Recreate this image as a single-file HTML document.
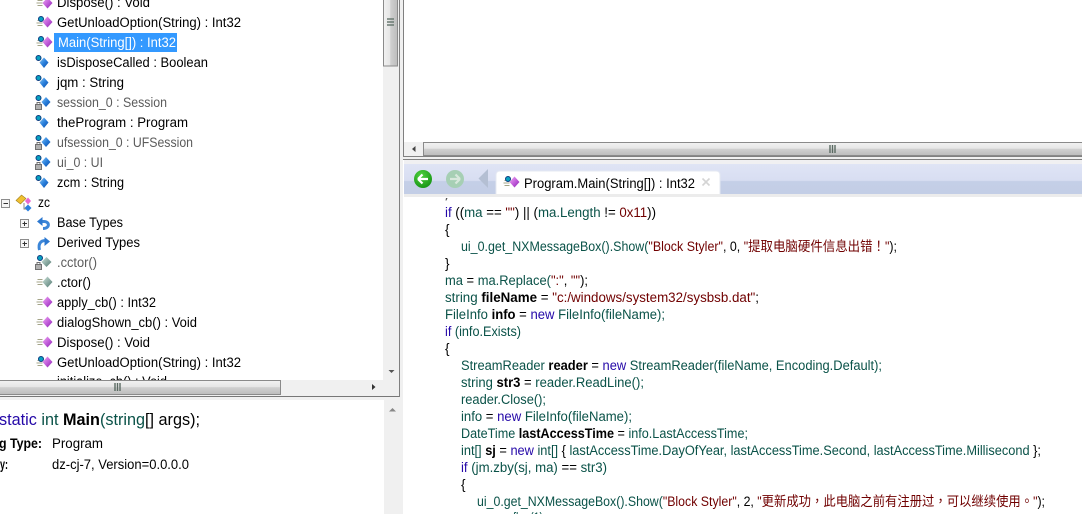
<!DOCTYPE html>
<html><head><meta charset="utf-8">
<style>
html,body{margin:0;padding:0;width:1082px;height:514px;overflow:hidden;background:#fff}
svg{display:block}
text{font-family:"Liberation Sans","Noto Sans CJK SC",sans-serif;font-size:13.5px;white-space:pre}
.t{fill:#000}
.g{fill:#5c5c5c}
.c{fill:#0a5248}
.k{fill:#2408a8}
.s{fill:#700000}
.p{fill:#000}
.b{font-weight:bold;fill:#000}
.z{font-family:"Noto Sans CJK TC",sans-serif}
</style></head><body>
<svg width="1082" height="514" viewBox="0 0 1082 514" xmlns="http://www.w3.org/2000/svg">
<defs>
<linearGradient id="dp" x1="0" y1="0" x2="1" y2="1"><stop offset="0" stop-color="#f0b0f0"/><stop offset=".5" stop-color="#c460dc"/><stop offset="1" stop-color="#8a24b0"/></linearGradient>
<linearGradient id="db" x1="0" y1="0" x2="1" y2="1"><stop offset="0" stop-color="#8cc8f4"/><stop offset=".5" stop-color="#2a80dc"/><stop offset="1" stop-color="#0a4ca8"/></linearGradient>
<linearGradient id="dg" x1="0" y1="0" x2="1" y2="1"><stop offset="0" stop-color="#d0e4dc"/><stop offset="1" stop-color="#507870"/></linearGradient>
<linearGradient id="hs" x1="0" y1="0" x2="0" y2="1"><stop offset="0" stop-color="#f2f2f2"/><stop offset=".45" stop-color="#e6e6e6"/><stop offset=".5" stop-color="#d0d0d0"/><stop offset="1" stop-color="#bcbcbc"/></linearGradient>
<linearGradient id="vs" x1="0" y1="0" x2="1" y2="0"><stop offset="0" stop-color="#f2f2f2"/><stop offset=".45" stop-color="#e6e6e6"/><stop offset=".5" stop-color="#d0d0d0"/><stop offset="1" stop-color="#bcbcbc"/></linearGradient>
<linearGradient id="band" x1="0" y1="0" x2="0" y2="1"><stop offset="0" stop-color="#dfe4f5"/><stop offset=".55" stop-color="#d8def2"/><stop offset=".58" stop-color="#c4cfe7"/><stop offset="1" stop-color="#c3cee6"/></linearGradient>
<radialGradient id="gb" cx=".4" cy=".3" r=".8"><stop offset="0" stop-color="#50d040"/><stop offset="1" stop-color="#109010"/></radialGradient>

<g id="lines"><path d="M0 -2.500h5M-1 0h6M0 2.500h5" stroke="#a4a488" stroke-width="1" fill="none"/></g>
<g id="dot"><circle cx="0" cy="0" r="2.500" fill="#08a0c0" stroke="#0c3c80" stroke-width="1"/></g>
<g id="m"><use href="#lines" x="37.500" y="0"/><path d="M47.500-5.500l5 5.500-5 5.500-5-5.500z" fill="url(#dp)"/></g>
<g id="ms"><use href="#lines" x="37.500" y="1"/><use href="#dot" x="41" y="-3"/><path d="M47.500-5.500l5 5.500-5 5.500-5-5.500z" fill="url(#dp)"/></g>
<g id="mc"><use href="#lines" x="37.500" y="0"/><path d="M47.500-5.500l5 5.500-5 5.500-5-5.500z" fill="url(#dg)"/></g>
<g id="f"><use href="#dot" x="38.500" y="-4"/><path d="M44-4.500l4.500 5-4.500 5.500-4.500-5.500z" fill="url(#db)"/></g>
<g id="lock"><rect x="35.500" y="2.500" width="6" height="5" fill="#b0b0b0" stroke="#707070"/><path d="M37 2.500v-2h3v2" fill="none" stroke="#707070"/></g>
<g id="fp"><use href="#dot" x="38.500" y="-4"/><path d="M46-5l4.500 5-4.500 5-4.500-5z" fill="url(#db)"/><use href="#lock"/></g>
<g id="plus"><rect x="-4" y="-4" width="8" height="8" fill="#f6f6f6" stroke="#8c8c8c"/><path d="M-2 0h4.500M0-2v4.500" stroke="#333"/></g>
<g id="grip"><path d="M0 0v8M2.500 0v8M5 0v8" stroke="#5a6a62" stroke-width="1.400"/></g>
<g id="gripv"><path d="M0 0h7M0 3h7M0 6h7" stroke="#6a7a72" stroke-width="1.400"/></g>
</defs>

<rect width="1082" height="514" fill="#fff"/>

<!-- tree -->
<rect x="54" y="33" width="123" height="19" fill="#3399ff"/>
<g>
<text x="57" y="7" class="t" textLength="93" lengthAdjust="spacingAndGlyphs">Dispose() : Void</text>
<text x="57" y="27" class="t" textLength="184" lengthAdjust="spacingAndGlyphs">GetUnloadOption(String) : Int32</text>
<text x="58" y="47" fill="#fff" textLength="118" lengthAdjust="spacingAndGlyphs">Main(String[]) : Int32</text>
<text x="57" y="67" class="t" textLength="151" lengthAdjust="spacingAndGlyphs">isDisposeCalled : Boolean</text>
<text x="57" y="87" class="t" textLength="67" lengthAdjust="spacingAndGlyphs">jqm : String</text>
<text x="57" y="107" class="g" textLength="110" lengthAdjust="spacingAndGlyphs">session_0 : Session</text>
<text x="57" y="127" class="t" textLength="131" lengthAdjust="spacingAndGlyphs">theProgram : Program</text>
<text x="57" y="147" class="g" textLength="136" lengthAdjust="spacingAndGlyphs">ufsession_0 : UFSession</text>
<text x="57" y="167" class="g" textLength="46" lengthAdjust="spacingAndGlyphs">ui_0 : UI</text>
<text x="57" y="187" class="t" textLength="67" lengthAdjust="spacingAndGlyphs">zcm : String</text>
<text x="38" y="207" class="t" textLength="12" lengthAdjust="spacingAndGlyphs">zc</text>
<text x="57" y="227" class="t" textLength="66" lengthAdjust="spacingAndGlyphs">Base Types</text>
<text x="57" y="247" class="t" textLength="83" lengthAdjust="spacingAndGlyphs">Derived Types</text>
<text x="57" y="267" class="g" textLength="40" lengthAdjust="spacingAndGlyphs">.cctor()</text>
<text x="57" y="287" class="t" textLength="34" lengthAdjust="spacingAndGlyphs">.ctor()</text>
<text x="57" y="307" class="t" textLength="99" lengthAdjust="spacingAndGlyphs">apply_cb() : Int32</text>
<text x="57" y="327" class="t" textLength="140" lengthAdjust="spacingAndGlyphs">dialogShown_cb() : Void</text>
<text x="57" y="347" class="t" textLength="93" lengthAdjust="spacingAndGlyphs">Dispose() : Void</text>
<text x="57" y="367" class="t" textLength="184" lengthAdjust="spacingAndGlyphs">GetUnloadOption(String) : Int32</text>
<text x="57" y="386" class="t" textLength="110" lengthAdjust="spacingAndGlyphs">initialize_cb() : Void</text>
</g>
<use href="#m" y="3"/>
<use href="#ms" y="22"/>
<use href="#ms" y="42"/>
<use href="#f" y="62"/>
<use href="#f" y="82"/>
<use href="#fp" y="102"/>
<use href="#f" y="122"/>
<use href="#fp" y="142"/>
<use href="#fp" y="162"/>
<use href="#f" y="182"/>
<!-- zc icon -->
<path d="M16 200.500l5.500-5.500 4.500 3.500-5.500 5.500z" fill="#f0c030" stroke="#a08020" stroke-width=".6"/>
<path d="M28 197.500l3 3.500-3 3.500-3-3.500z" fill="#e868d0"/>
<path d="M28 204.500l3.500 3.500-3.500 3.500-3.500-3.500z" fill="#2c80e0"/>
<path d="M24 203v6h2" stroke="#888" fill="none"/>
<!-- collapse box -->
<rect x="1.500" y="199.500" width="8" height="8" fill="#f6f6f6" stroke="#8c8c8c"/>
<path d="M3.500 203.500h4.500" stroke="#333"/>
<use href="#plus" x="24.500" y="223.500"/>
<use href="#plus" x="24.500" y="243.500"/>
<!-- base/derived -->
<path d="M41 221.500h3c6 0 6 7-1 7" fill="none" stroke="#3c86d8" stroke-width="3"/>
<path d="M42.500 217l-5.500 4.500 5.500 4.500z" fill="#2c78d0"/>
<path d="M39.500 250c-1.500-6 1-9.500 6-9.500" fill="none" stroke="#3c86d8" stroke-width="3"/>
<path d="M44.500 237l5.500 4.500-5.500 4.500z" fill="#2c78d0"/>
<use href="#mc" y="282"/>
<g transform="translate(0,262)"><use href="#dot" x="40" y="-4"/><path d="M46.500-5l5 5-5 5-5-5z" fill="url(#dg)"/><use href="#lock"/></g>
<use href="#m" y="302"/>
<use href="#m" y="322"/>
<use href="#m" y="342"/>
<use href="#ms" y="362"/>

<!-- tree v scrollbar -->
<rect x="383" y="0" width="16" height="397" fill="#f0f0f0"/>
<rect x="383.500" y="-2" width="14" height="68" fill="url(#vs)" stroke="#8a8a8a"/>
<use href="#gripv" x="387" y="19"/>
<path d="M388.500 370h6l-3 3z" fill="#555"/>
<!-- tree h scrollbar -->
<rect x="0" y="380" width="383" height="16" fill="#f0f0f0"/>
<rect x="-2" y="380.500" width="282.500" height="14" fill="url(#hs)" stroke="#8a8a8a"/>
<use href="#grip" x="115" y="383"/>
<path d="M372 384v6l3.500-3z" fill="#333"/>
<rect x="0" y="396" width="399" height="1" fill="#777"/>
<rect x="399" y="0" width="1" height="397" fill="#808080"/>

<!-- separator -->
<rect x="400" y="0" width="3" height="514" fill="#f0f0f0"/>
<rect x="0" y="397" width="403" height="3" fill="#f0f0f0"/>

<!-- bottom left info -->
<text x="-1" y="425" style="font-size:16.500px" textLength="201" lengthAdjust="spacingAndGlyphs"><tspan class="k">static</tspan> <tspan class="c">int</tspan> <tspan class="b">Main</tspan><tspan class="c">(string</tspan><tspan class="p">[] args);</tspan></text>
<text x="-1" y="448" class="b" textLength="43" lengthAdjust="spacingAndGlyphs">g Type:</text>
<text x="52" y="448" class="t" textLength="51" lengthAdjust="spacingAndGlyphs">Program</text>
<text x="0" y="469" class="b" textLength="8" lengthAdjust="spacingAndGlyphs">y:</text>
<text x="52" y="469" class="t" textLength="137" lengthAdjust="spacingAndGlyphs">dz-cj-7, Version=0.0.0.0</text>
<rect x="384" y="400" width="19" height="114" fill="#f0f0f0"/>
<path d="M389 411.500h7l-3.500-3.500z" fill="#888"/>

<!-- right top panel -->
<rect x="403" y="0" width="1" height="157" fill="#808080"/>
<rect x="404" y="142" width="678" height="14" fill="#f0f0f0"/>
<rect x="423.500" y="142.500" width="660" height="13" fill="url(#hs)" stroke="#8a8a8a"/>
<use href="#grip" x="830" y="145"/>
<path d="M415.500 146v6l-3.500-3z" fill="#444"/>
<rect x="403" y="156" width="679" height="1" fill="#808080"/>
<rect x="403" y="157" width="679" height="2" fill="#f0f0f0"/>

<!-- code -->
<g>
<text x="445" y="217" textLength="211" lengthAdjust="spacingAndGlyphs"><tspan class="k">if</tspan><tspan class="p"> ((</tspan><tspan class="c">ma</tspan><tspan class="p"> == </tspan><tspan class="s">""</tspan><tspan class="p">) || (</tspan><tspan class="c">ma.Length</tspan><tspan class="p"> != </tspan><tspan class="s">0x11</tspan><tspan class="p">))</tspan></text>
<text x="445" y="234" class="p">{</text>
<text x="461" y="251" textLength="436" lengthAdjust="spacingAndGlyphs"><tspan class="c">ui_0.get_NXMessageBox().Show(</tspan><tspan class="s">"Block Styler"</tspan><tspan class="p">, 0, </tspan><tspan class="s">"提取电脑硬件信息出错<tspan class="z">！</tspan>"</tspan><tspan class="p">);</tspan></text>
<text x="445" y="268" class="p">}</text>
<text x="445" y="285" textLength="143" lengthAdjust="spacingAndGlyphs"><tspan class="c">ma</tspan><tspan class="p"> = </tspan><tspan class="c">ma.Replace(</tspan><tspan class="s">":"</tspan><tspan class="p">, </tspan><tspan class="s">""</tspan><tspan class="p">);</tspan></text>
<text x="445" y="302" textLength="314" lengthAdjust="spacingAndGlyphs"><tspan class="c">string</tspan> <tspan class="b">fileName</tspan><tspan class="p"> = </tspan><tspan class="s">"c:/windows/system32/sysbsb.dat"</tspan><tspan class="p">;</tspan></text>
<text x="445" y="319" textLength="220" lengthAdjust="spacingAndGlyphs"><tspan class="c">FileInfo</tspan> <tspan class="b">info</tspan><tspan class="p"> = </tspan><tspan class="k">new</tspan> <tspan class="c">FileInfo(fileName);</tspan></text>
<text x="445" y="336" textLength="76" lengthAdjust="spacingAndGlyphs"><tspan class="k">if</tspan><tspan class="c"> (info.Exists)</tspan></text>
<text x="445" y="353" class="p">{</text>
<text x="461" y="370" textLength="421" lengthAdjust="spacingAndGlyphs"><tspan class="c">StreamReader</tspan> <tspan class="b">reader</tspan><tspan class="p"> = </tspan><tspan class="k">new</tspan> <tspan class="c">StreamReader(fileName, Encoding.Default);</tspan></text>
<text x="461" y="387" textLength="183" lengthAdjust="spacingAndGlyphs"><tspan class="c">string</tspan> <tspan class="b">str3</tspan><tspan class="p"> = </tspan><tspan class="c">reader.ReadLine();</tspan></text>
<text x="461" y="404" class="c" textLength="85" lengthAdjust="spacingAndGlyphs">reader.Close();</text>
<text x="461" y="421" textLength="171" lengthAdjust="spacingAndGlyphs"><tspan class="c">info</tspan><tspan class="p"> = </tspan><tspan class="k">new</tspan> <tspan class="c">FileInfo(fileName);</tspan></text>
<text x="461" y="438" textLength="287" lengthAdjust="spacingAndGlyphs"><tspan class="c">DateTime</tspan> <tspan class="b">lastAccessTime</tspan><tspan class="p"> = </tspan><tspan class="c">info.LastAccessTime;</tspan></text>
<text x="461" y="455" textLength="580" lengthAdjust="spacingAndGlyphs"><tspan class="c">int[]</tspan> <tspan class="b">sj</tspan><tspan class="p"> = </tspan><tspan class="k">new</tspan> <tspan class="c">int[]</tspan><tspan class="p"> { </tspan><tspan class="c">lastAccessTime.DayOfYear, lastAccessTime.Second, lastAccessTime.Millisecond</tspan><tspan class="p"> };</tspan></text>
<text x="461" y="472" textLength="146" lengthAdjust="spacingAndGlyphs"><tspan class="k">if</tspan><tspan class="c"> (jm.zby(sj, ma)</tspan><tspan class="p"> == </tspan><tspan class="c">str3)</tspan></text>
<text x="461" y="489" class="p">{</text>
<text x="477" y="506" textLength="568" lengthAdjust="spacingAndGlyphs"><tspan class="c">ui_0.get_NXMessageBox().Show(</tspan><tspan class="s">"Block Styler"</tspan><tspan class="p">, 2, </tspan><tspan class="s">"更新成功<tspan class="z">，</tspan>此电脑之前有注册过<tspan class="z">，</tspan>可以继续使用<tspan class="z">。</tspan>"</tspan><tspan class="p">);</tspan></text>
<text x="513" y="522" class="c" textLength="30" lengthAdjust="spacingAndGlyphs">flag(1)</text>
</g>

<!-- tab header -->
<rect x="403" y="159" width="679" height="39" fill="#fff"/>
<rect x="403" y="159" width="679" height="1" fill="#808080"/>
<rect x="404" y="160" width="678" height="4" fill="#f0f0f2"/>
<rect x="404" y="164" width="678" height="30" fill="url(#band)"/>
<rect x="404" y="194" width="678" height="3" fill="#ececec"/>
<path d="M446 198h1.500l-1 2.500h-1z" fill="#555"/>
<circle cx="423" cy="179" r="9" fill="url(#gb)"/>
<path d="M418 179l4.500-4.500M418 179l4.500 4.500M418 179h10" stroke="#fff" stroke-width="2.200" fill="none"/>
<circle cx="455" cy="179" r="9" fill="#a6cfb4"/>
<path d="M460 179l-4.500-4.500M460 179l-4.500 4.500M460 179h-10" stroke="#d8e8dc" stroke-width="2.200" fill="none"/>
<path d="M488 169v19l-9.500-9.500z" fill="#b4bfd3"/>
<path d="M496 194v-19q0-4 4-4h216q4 0 4 4v19z" fill="#fff"/>
<path d="M496 194v-19q0-4 4-4h216q4 0 4 4v19" fill="none" stroke="#e4e8f2"/>
<use href="#ms" transform="translate(467,182)"/>
<text x="524" y="188" class="t" textLength="171" lengthAdjust="spacingAndGlyphs">Program.Main(String[]) : Int32</text>
<path d="M702.500 178.500l7 7M709.500 178.500l-7 7" stroke="#d4d4d4" stroke-width="1.600"/>
</svg>
</body></html>
